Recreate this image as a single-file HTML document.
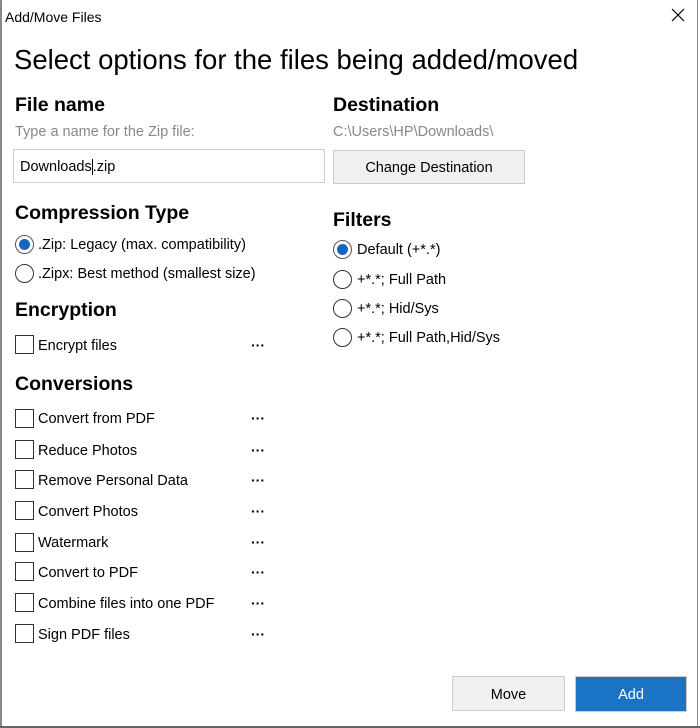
<!DOCTYPE html><html><head><style>
body{margin:0;width:700px;height:728px;background:#fff;font-family:"Liberation Sans",sans-serif;position:relative;overflow:hidden;color:#000}
.a{position:absolute;white-space:nowrap}
.h{font-weight:bold;font-size:19.5px}
.t{font-size:14.5px}
.cb{position:absolute;width:17px;height:17px;border:1px solid #333;background:#fff}
.rd{position:absolute;border:1px solid #333;border-radius:50%;box-sizing:border-box;width:19px;height:19px}
.rd.on{border-color:#555}
.rd.on::after{content:"";position:absolute;left:3px;top:3px;width:11px;height:11px;border-radius:50%;background:#1565c0}
.dots{position:absolute;left:251px;font-size:14px;font-weight:bold}
</style></head><body>
<div class="a" style="left:0;top:0;width:2px;height:728px;background:#888"></div>
<div class="a" style="left:697px;top:0;width:1px;height:728px;background:#888"></div>
<div class="a" style="left:0;top:726px;width:700px;height:2px;background:#666"></div>
<div class="a" style="left:5px;top:9px;font-size:14px">Add/Move Files</div>
<svg class="a" style="left:671px;top:8px" width="14" height="14"><path d="M1 1L13 13M13 1L1 13" stroke="#000" stroke-width="1.2"/></svg>
<div class="a" style="left:14px;top:44px;font-size:27.5px">Select options for the files being added/moved</div>
<div class="a h" style="left:15px;top:94px">File name</div>
<div class="a t" style="left:15px;top:124px;color:#888">Type a name for the Zip file:</div>
<div class="a" style="left:13px;top:149px;width:310px;height:32px;border:1px solid #ccc"></div>
<div class="a t" style="left:20px;top:159px">Downloads<span style="border-left:1px solid #000">.</span>zip</div>
<div class="a h" style="left:333px;top:94px">Destination</div>
<div class="a t" style="left:333px;top:124px;color:#888">C:\Users\HP\Downloads\</div>
<div class="a t" style="left:333px;top:150px;width:190px;height:32px;border:1px solid #ccc;background:#f0f0f0;text-align:center;line-height:35px">Change Destination</div>
<div class="a h" style="left:15px;top:202px">Compression Type</div>
<div class="rd on" style="left:15px;top:235px"></div><div class="a t" style="left:38px;top:237px">.Zip: Legacy (max. compatibility)</div>
<div class="rd" style="left:15px;top:264px"></div><div class="a t" style="left:38px;top:266px">.Zipx: Best method (smallest size)</div>
<div class="a h" style="left:333px;top:209px">Filters</div>
<div class="rd on" style="left:333px;top:240px"></div><div class="a t" style="left:357px;top:242px">Default (+*.*)</div>
<div class="rd" style="left:333px;top:270px"></div><div class="a t" style="left:357px;top:272px">+*.*; Full Path</div>
<div class="rd" style="left:333px;top:299px"></div><div class="a t" style="left:357px;top:301px">+*.*; Hid/Sys</div>
<div class="rd" style="left:333px;top:328px"></div><div class="a t" style="left:357px;top:330px">+*.*; Full Path,Hid/Sys</div>
<div class="a h" style="left:15px;top:299px">Encryption</div>
<div class="cb" style="left:15px;top:335px"></div><div class="a t" style="left:38px;top:338px">Encrypt files</div><div class="dots" style="top:337px">···</div>
<div class="a h" style="left:15px;top:373px">Conversions</div>
<div class="cb" style="left:15px;top:409px"></div><div class="a t" style="left:38px;top:411px">Convert from PDF</div><div class="dots" style="top:410px">···</div>
<div class="cb" style="left:15px;top:440px"></div><div class="a t" style="left:38px;top:443px">Reduce Photos</div><div class="dots" style="top:442px">···</div>
<div class="cb" style="left:15px;top:470px"></div><div class="a t" style="left:38px;top:473px">Remove Personal Data</div><div class="dots" style="top:472px">···</div>
<div class="cb" style="left:15px;top:501px"></div><div class="a t" style="left:38px;top:504px">Convert Photos</div><div class="dots" style="top:503px">···</div>
<div class="cb" style="left:15px;top:533px"></div><div class="a t" style="left:38px;top:535px">Watermark</div><div class="dots" style="top:534px">···</div>
<div class="cb" style="left:15px;top:562px"></div><div class="a t" style="left:38px;top:565px">Convert to PDF</div><div class="dots" style="top:564px">···</div>
<div class="cb" style="left:15px;top:593px"></div><div class="a t" style="left:38px;top:596px">Combine files into one PDF</div><div class="dots" style="top:595px">···</div>
<div class="cb" style="left:15px;top:624px"></div><div class="a t" style="left:38px;top:627px">Sign PDF files</div><div class="dots" style="top:626px">···</div>
<div class="a t" style="left:452px;top:676px;width:111px;height:33px;border:1px solid #ccc;background:#f0f0f0;text-align:center;line-height:36px">Move</div>
<div class="a t" style="left:575px;top:676px;width:110px;height:34px;border:1px solid #ccc;background:#1a73c4;color:#fff;text-align:center;line-height:37px">Add</div>
</body></html>
